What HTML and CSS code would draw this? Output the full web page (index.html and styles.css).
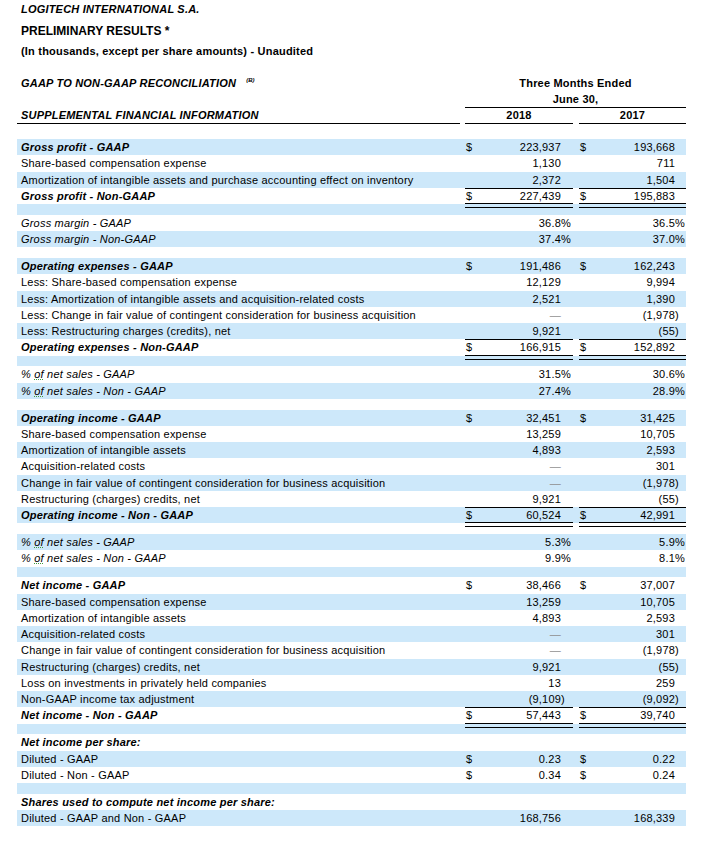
FILE: index.html
```html
<!DOCTYPE html>
<html>
<head>
<meta charset="utf-8">
<link rel="stylesheet" href="styles.css">
</head>
<body>
<div class="page">
  <div class="company">LOGITECH INTERNATIONAL S.A.</div>
  <div class="title">PRELIMINARY RESULTS *</div>
  <div class="subtitle">(In thousands, except per share amounts) - Unaudited</div>

  <div class="colhead">
    <div class="ch-label">GAAP TO NON-GAAP RECONCILIATION<span class="note">(B)</span></div>
    <div class="ch-period">Three Months Ended</div>
    <div class="ch-date">June 30,</div>
    <div class="ch-section">SUPPLEMENTAL FINANCIAL INFORMATION</div>
    <div class="ch-year y18">2018</div>
    <div class="ch-year y17">2017</div>
  </div>

  <div class="table">
    <div class="row"><div class="label bi">Gross profit - GAAP</div><div class="amt a18"><span>$</span><span class="val">223,937</span></div><div class="amt a17"><span>$</span><span class="val">193,668</span></div></div>
    <div class="row"><div class="label">Share-based compensation expense</div><div class="amt a18"><span class="val">1,130</span></div><div class="amt a17"><span class="val">711</span></div></div>
    <div class="row"><div class="label">Amortization of intangible assets and purchase accounting effect on inventory</div><div class="amt a18"><span class="val">2,372</span></div><div class="amt a17"><span class="val">1,504</span></div></div>
    <div class="row total"><div class="label bi">Gross profit - Non-GAAP</div><div class="amt a18"><span>$</span><span class="val">227,439</span></div><div class="amt a17"><span>$</span><span class="val">195,883</span></div></div>
    <div class="row spacer"></div>
    <div class="row"><div class="label it">Gross margin - GAAP</div><div class="amt a18"><span class="val">36.8<span class="pct">%</span></span></div><div class="amt a17"><span class="val">36.5<span class="pct">%</span></span></div></div>
    <div class="row"><div class="label it">Gross margin - Non-GAAP</div><div class="amt a18"><span class="val">37.4<span class="pct">%</span></span></div><div class="amt a17"><span class="val">37.0<span class="pct">%</span></span></div></div>
    <div class="row spacer"></div>
    <div class="row"><div class="label bi">Operating expenses - GAAP</div><div class="amt a18"><span>$</span><span class="val">191,486</span></div><div class="amt a17"><span>$</span><span class="val">162,243</span></div></div>
    <div class="row"><div class="label">Less: Share-based compensation expense</div><div class="amt a18"><span class="val">12,129</span></div><div class="amt a17"><span class="val">9,994</span></div></div>
    <div class="row"><div class="label">Less: Amortization of intangible assets and acquisition-related costs</div><div class="amt a18"><span class="val">2,521</span></div><div class="amt a17"><span class="val">1,390</span></div></div>
    <div class="row"><div class="label">Less: Change in fair value of contingent consideration for business acquisition</div><div class="amt a18"><span class="val dash">—</span></div><div class="amt a17"><span class="val">(1,978<span class="rp">)</span></span></div></div>
    <div class="row"><div class="label">Less: Restructuring charges (credits), net</div><div class="amt a18"><span class="val">9,921</span></div><div class="amt a17"><span class="val">(55<span class="rp">)</span></span></div></div>
    <div class="row total"><div class="label bi">Operating expenses - Non-GAAP</div><div class="amt a18"><span>$</span><span class="val">166,915</span></div><div class="amt a17"><span>$</span><span class="val">152,892</span></div></div>
    <div class="row spacer"></div>
    <div class="row"><div class="label it">% <span class="sq">of</span> net sales - GAAP</div><div class="amt a18"><span class="val">31.5<span class="pct">%</span></span></div><div class="amt a17"><span class="val">30.6<span class="pct">%</span></span></div></div>
    <div class="row"><div class="label it">% <span class="sq">of</span> net sales - Non - GAAP</div><div class="amt a18"><span class="val">27.4<span class="pct">%</span></span></div><div class="amt a17"><span class="val">28.9<span class="pct">%</span></span></div></div>
    <div class="row spacer"></div>
    <div class="row"><div class="label bi">Operating income - GAAP</div><div class="amt a18"><span>$</span><span class="val">32,451</span></div><div class="amt a17"><span>$</span><span class="val">31,425</span></div></div>
    <div class="row"><div class="label">Share-based compensation expense</div><div class="amt a18"><span class="val">13,259</span></div><div class="amt a17"><span class="val">10,705</span></div></div>
    <div class="row"><div class="label">Amortization of intangible assets</div><div class="amt a18"><span class="val">4,893</span></div><div class="amt a17"><span class="val">2,593</span></div></div>
    <div class="row"><div class="label">Acquisition-related costs</div><div class="amt a18"><span class="val dash">—</span></div><div class="amt a17"><span class="val">301</span></div></div>
    <div class="row"><div class="label">Change in fair value of contingent consideration for business acquisition</div><div class="amt a18"><span class="val dash">—</span></div><div class="amt a17"><span class="val">(1,978<span class="rp">)</span></span></div></div>
    <div class="row"><div class="label">Restructuring (charges) credits, net</div><div class="amt a18"><span class="val">9,921</span></div><div class="amt a17"><span class="val">(55<span class="rp">)</span></span></div></div>
    <div class="row total"><div class="label bi">Operating income - Non - GAAP</div><div class="amt a18"><span>$</span><span class="val">60,524</span></div><div class="amt a17"><span>$</span><span class="val">42,991</span></div></div>
    <div class="row spacer"></div>
    <div class="row"><div class="label it">% <span class="sq">of</span> net sales - GAAP</div><div class="amt a18"><span class="val">5.3<span class="pct">%</span></span></div><div class="amt a17"><span class="val">5.9<span class="pct">%</span></span></div></div>
    <div class="row"><div class="label it">% <span class="sq">of</span> net sales - Non - GAAP</div><div class="amt a18"><span class="val">9.9<span class="pct">%</span></span></div><div class="amt a17"><span class="val">8.1<span class="pct">%</span></span></div></div>
    <div class="row spacer"></div>
    <div class="row"><div class="label bi">Net income - GAAP</div><div class="amt a18"><span>$</span><span class="val">38,466</span></div><div class="amt a17"><span>$</span><span class="val">37,007</span></div></div>
    <div class="row"><div class="label">Share-based compensation expense</div><div class="amt a18"><span class="val">13,259</span></div><div class="amt a17"><span class="val">10,705</span></div></div>
    <div class="row"><div class="label">Amortization of intangible assets</div><div class="amt a18"><span class="val">4,893</span></div><div class="amt a17"><span class="val">2,593</span></div></div>
    <div class="row"><div class="label">Acquisition-related costs</div><div class="amt a18"><span class="val dash">—</span></div><div class="amt a17"><span class="val">301</span></div></div>
    <div class="row"><div class="label">Change in fair value of contingent consideration for business acquisition</div><div class="amt a18"><span class="val dash">—</span></div><div class="amt a17"><span class="val">(1,978<span class="rp">)</span></span></div></div>
    <div class="row"><div class="label">Restructuring (charges) credits, net</div><div class="amt a18"><span class="val">9,921</span></div><div class="amt a17"><span class="val">(55<span class="rp">)</span></span></div></div>
    <div class="row"><div class="label">Loss on investments in privately held companies</div><div class="amt a18"><span class="val">13</span></div><div class="amt a17"><span class="val">259</span></div></div>
    <div class="row"><div class="label">Non-GAAP income tax adjustment</div><div class="amt a18"><span class="val">(9,109<span class="rp">)</span></span></div><div class="amt a17"><span class="val">(9,092<span class="rp">)</span></span></div></div>
    <div class="row total"><div class="label bi">Net income - Non - GAAP</div><div class="amt a18"><span>$</span><span class="val">57,443</span></div><div class="amt a17"><span>$</span><span class="val">39,740</span></div></div>
    <div class="row spacer"></div>
    <div class="row"><div class="label bi">Net income per share:</div></div>
    <div class="row"><div class="label">Diluted - GAAP</div><div class="amt a18"><span>$</span><span class="val">0.23</span></div><div class="amt a17"><span>$</span><span class="val">0.22</span></div></div>
    <div class="row"><div class="label">Diluted - Non - GAAP</div><div class="amt a18"><span>$</span><span class="val">0.34</span></div><div class="amt a17"><span>$</span><span class="val">0.24</span></div></div>
    <div class="row spacer"></div>
    <div class="row"><div class="label bi">Shares used to compute net income per share:</div></div>
    <div class="row"><div class="label">Diluted - GAAP and Non - GAAP</div><div class="amt a18"><span class="val">168,756</span></div><div class="amt a17"><span class="val">168,339</span></div></div>
  </div>
</div>
</body>
</html>
```

FILE: styles.css
```css
* {
  box-sizing: border-box;
}

body {
  margin: 0;
  background: #ffffff;
  color: #000000;
  font-family: "Liberation Sans", Arial, sans-serif;
  font-size: 11px;
  letter-spacing: 0.2px;
}

.page {
  width: 669px;
  margin-left: 17px;
}

.company {
  padding: 1px 0 0 4px;
  line-height: 16px;
  font-weight: bold;
  font-style: italic;
}

.title {
  margin-top: 6px;
  padding-left: 4px;
  line-height: 16px;
  font-size: 12px;
  letter-spacing: 0;
  font-weight: bold;
}

.subtitle {
  margin-top: 4px;
  padding-left: 4px;
  line-height: 16px;
  font-weight: bold;
}

.colhead {
  margin-top: 16px;
  display: grid;
  grid-template-columns: 443px 5px 108px 6px 107px;
  grid-template-rows: 16px 17px 16px;
  font-weight: bold;
}

.ch-label {
  grid-column: 1;
  grid-row: 1;
  padding-left: 4px;
  line-height: 16px;
  font-style: italic;
}

.note {
  display: inline-block;
  margin-left: 10px;
  font-size: 6px;
  vertical-align: 5px;
  line-height: 6px;
  letter-spacing: 0;
}

.ch-period {
  grid-column: 3 / 6;
  grid-row: 1;
  text-align: center;
  line-height: 16px;
}

.ch-date {
  grid-column: 3 / 6;
  grid-row: 2;
  text-align: center;
  line-height: 16px;
  border-bottom: 1px solid #000;
}

.ch-section {
  grid-column: 1;
  grid-row: 3;
  padding-left: 4px;
  line-height: 15px;
  font-style: italic;
  border-bottom: 1px solid #000;
}

.ch-year {
  grid-row: 3;
  text-align: center;
  line-height: 15px;
  border-bottom: 1px solid #000;
}

.y18 {
  grid-column: 3;
}

.y17 {
  grid-column: 5;
}

.table {
  margin-top: 15px;
}

.row {
  display: grid;
  grid-template-columns: 443px 5px 108px 6px 107px;
  height: 16.25px;
  line-height: 16.25px;
}

.row:nth-child(odd) {
  background: #cde8fa;
}

.spacer {
  height: 10.75px;
}

.label {
  grid-column: 1;
  padding-left: 4px;
  white-space: nowrap;
}

.bi {
  font-weight: bold;
  font-style: italic;
}

.it {
  font-style: italic;
}

.sq {
  text-decoration: underline dotted #3f9a3f;
  text-decoration-thickness: 1px;
  text-underline-offset: 1px;
}

.amt {
  position: relative;
  display: flex;
  padding-left: 1px;
  white-space: nowrap;
}

.a18 {
  grid-column: 3;
  padding-right: 12px;
}

.a17 {
  grid-column: 5;
  padding-right: 11px;
}

.val {
  margin-left: auto;
}

.pct {
  margin-right: -10px;
}

.rp {
  margin-right: -3.9px;
}

.dash {
  color: #8e8e8e;
}

.total .amt::before {
  content: "";
  position: absolute;
  left: 0;
  right: 0;
  top: 0;
  height: 1px;
  background: #000;
}

.total .amt::after {
  content: "";
  position: absolute;
  left: 0;
  right: 0;
  top: calc(100% - 1px);
  height: 3px;
  border-top: 1px solid #000;
  border-bottom: 1px solid #000;
}
```
